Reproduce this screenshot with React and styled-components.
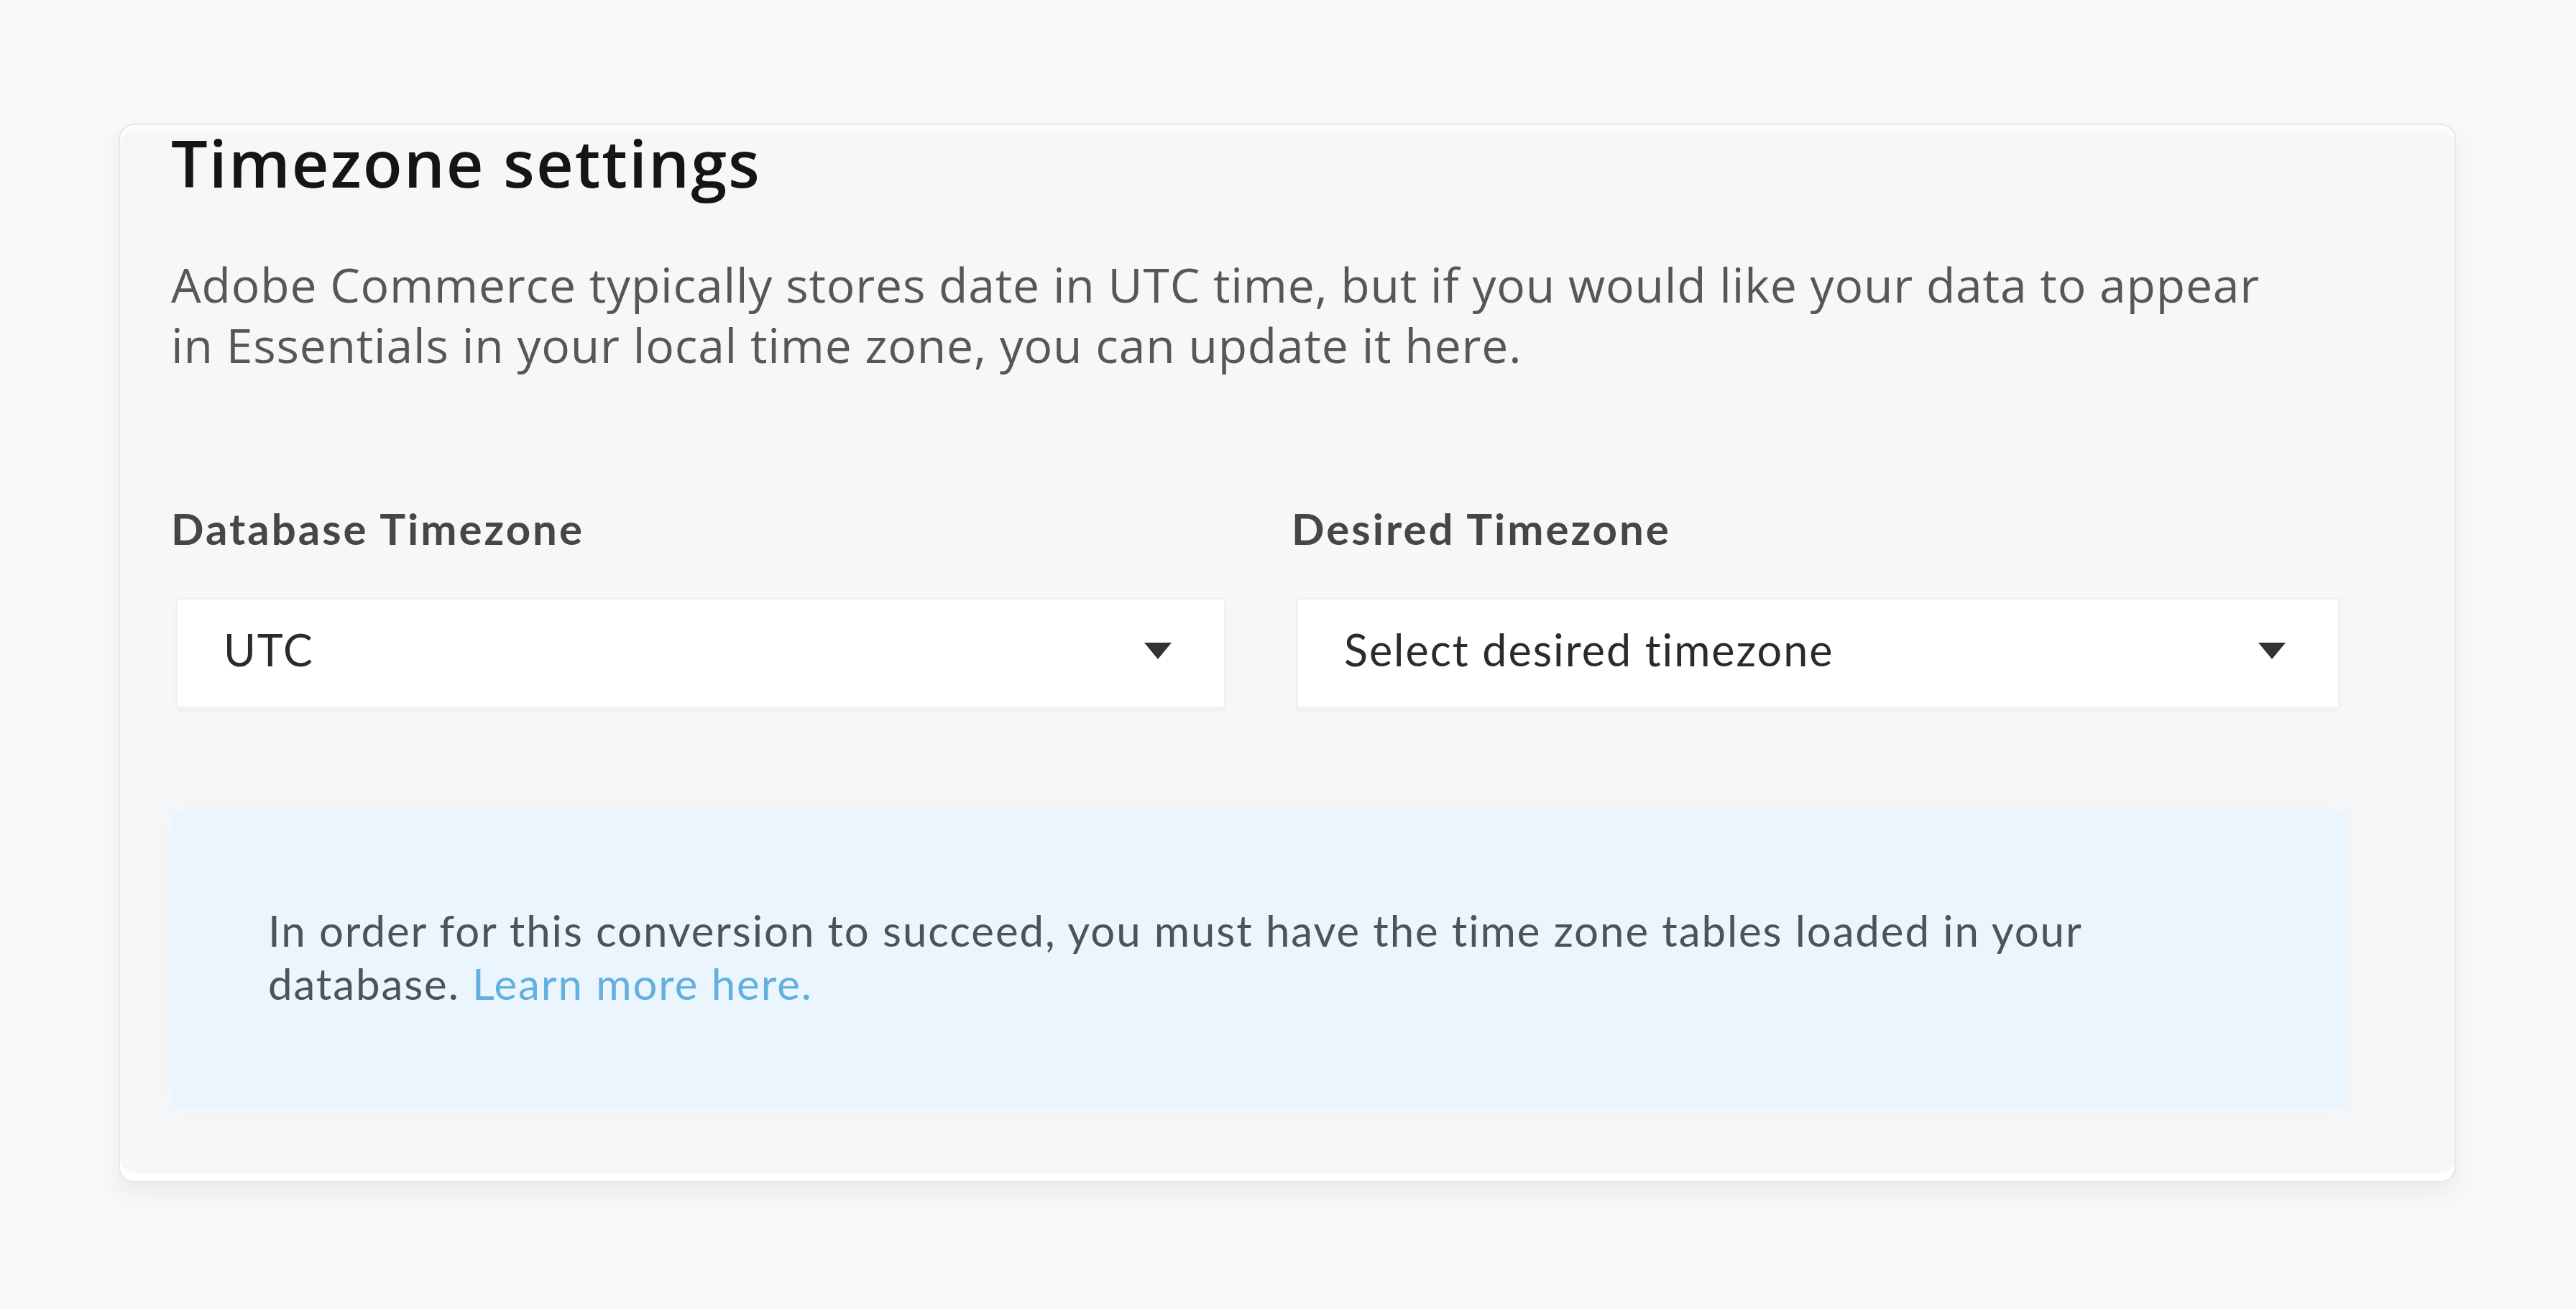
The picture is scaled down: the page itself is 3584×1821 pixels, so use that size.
import styled, { createGlobalStyle } from "styled-components";

const GlobalStyle = createGlobalStyle`
  html, body {
    margin: 0;
    padding: 0;
    background-color: #f8f8f8;
  }
`;

export default function App() {
  return (
    <>
      <GlobalStyle />
      <Page>
        <Card>
          <Title>Timezone settings</Title>
          <Description>
            Adobe Commerce typically stores date in UTC time, but if you would
            like your data to appear in Essentials in your local time zone, you
            can update it here.
          </Description>

          <Fields>
            <Field>
              <Label>Database Timezone</Label>
              <Select>
                <SelectText>UTC</SelectText>
                <Caret />
              </Select>
            </Field>
            <Field>
              <Label>Desired Timezone</Label>
              <Select>
                <SelectText>Select desired timezone</SelectText>
                <Caret />
              </Select>
            </Field>
          </Fields>

          <Notice>
            <NoticeText>
              In order for this conversion to succeed, you must have the time
              zone tables loaded in your database.{" "}
              <Link href="#">Learn more here.</Link>
            </NoticeText>
          </Notice>
        </Card>
      </Page>
    </>
  );
}

function Caret() {
  return (
    <CaretIcon viewBox="0 0 44 28" aria-hidden="true">
      <path d="M3 2 H41 L22 25 Z" fill="#333" />
    </CaretIcon>
  );
}

const Page = styled.div`
  padding: 172px 0 176px 165px;
  min-height: 1821px;
  box-sizing: border-box;
`;

const Card = styled.div`
  box-sizing: border-box;
  width: 3252px;
  height: 1473px;
  padding: 2px 151px 0 71px;
  background-color: #f7f7f7;
  border: 2px solid #e7e7e7;
  border-radius: 22px;
  box-shadow: inset 0 8px 0 #fdfdfd, inset 0 -11px 0 #ffffff,
    0 14px 30px rgba(0, 0, 0, 0.06);
`;

const Title = styled.h1`
  margin: 0;
  font-family: "Open Sans", "Noto Sans", sans-serif;
  font-weight: 600;
  font-size: 90px;
  letter-spacing: 2px;
  line-height: 100px;
  color: #151515;
`;

const Description = styled.p`
  margin: 77px 0 0;
  max-width: 2970px;
  font-family: "Open Sans", "Noto Sans", sans-serif;
  font-size: 66px;
  letter-spacing: 0.8px;
  line-height: 84px;
  color: #575757;
`;

const Fields = styled.div`
  display: grid;
  grid-template-columns: 1474px 1465px;
  column-gap: 85px;
  margin-top: 179px;
`;

const Field = styled.div`
  display: flex;
  flex-direction: column;
`;

const Label = styled.label`
  font-family: Lato, "Liberation Sans", sans-serif;
  font-weight: 700;
  font-size: 60px;
  letter-spacing: 3px;
  line-height: 70px;
  color: #464646;
`;

const Select = styled.div`
  display: flex;
  align-items: center;
  justify-content: space-between;
  box-sizing: border-box;
  height: 149px;
  margin: 64px 9px 0;
  padding: 0 70px 0 64px;
  background-color: #fff;
  box-shadow: 0 0 0 3px #f1f1f1, 0 5px 6px rgba(0, 0, 0, 0.06);
`;

const SelectText = styled.span`
  font-family: Lato, "Liberation Sans", sans-serif;
  font-size: 61px;
  letter-spacing: 2px;
  color: #2b2b2b;
  padding-bottom: 10px;
`;

const CaretIcon = styled.svg`
  width: 44px;
  height: 28px;
  margin-bottom: 6px;
`;

const Notice = styled.div`
  box-sizing: border-box;
  height: 412px;
  margin-top: 146px;
  padding: 128px 135px 0;
  background-color: #eaf5fd;
  box-shadow: 0 0 22px 6px rgba(234, 245, 253, 0.8);
`;

const NoticeText = styled.p`
  margin: 0;
  max-width: 2700px;
  font-family: Lato, "Liberation Sans", sans-serif;
  font-size: 60px;
  letter-spacing: 1.9px;
  line-height: 74px;
  color: #4d5358;
`;

const Link = styled.a`
  color: #62afe0;
  text-decoration: none;
`;
